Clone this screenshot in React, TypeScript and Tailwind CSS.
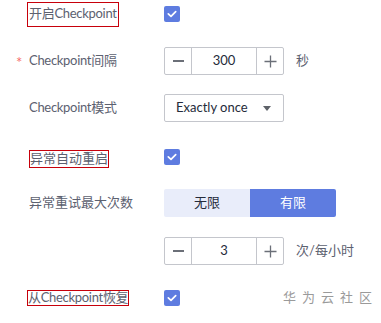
import React from "react";

const font = { fontFamily: 'Lato, "Noto Sans CJK SC", sans-serif' };

function Check() {
  return (
    <div className="w-4 h-4 rounded-[2px] bg-[#5e7ce0] flex items-center justify-center">
      <svg width="10" height="8" viewBox="0 0 10 8" fill="none">
        <path d="M1.3 3.8 L4 6.3 L8.7 1.6" stroke="white" strokeWidth="1.7" strokeLinecap="round" strokeLinejoin="round" />
      </svg>
    </div>
  );
}

function Stepper({ value }: { value: string }) {
  return (
    <div className="flex h-[28px] w-[120px] border border-[#c4c6cc] rounded-[2px] text-[13px] text-[#252b3a]">
      <div className="w-[27px] flex items-center justify-center border-r border-[#c4c6cc]">
        <div className="w-[11px] h-[1.5px] bg-[#6b6f78]" />
      </div>
      <div className="flex-1 flex items-center justify-center">{value}</div>
      <div className="w-[27px] flex items-center justify-center border-l border-[#c4c6cc]">
        <svg width="13" height="13" viewBox="0 0 13 13">
          <path d="M6.5 0.5 V12.5 M0.5 6.5 H12.5" stroke="#6b6f78" strokeWidth="1.3" />
        </svg>
      </div>
    </div>
  );
}

export default function App() {
  return (
    <div className="w-[381px] h-[323px] bg-white relative overflow-hidden text-[13px] text-[#5c6170]" style={font}>
      <div className="flex flex-col">
        {/* row 1 */}
        <div className="flex items-center h-[28px] mt-0">
          <div className="w-[164px] pl-[27px] flex items-center">
            <span className="border border-[#c7000b] h-[25px] px-[1px] flex items-center tracking-[-0.3px]">开启Checkpoint</span>
          </div>
          <Check />
        </div>
        {/* row 2 */}
        <div className="flex items-center h-[28px] mt-[19px]">
          <div className="w-[164px] pl-[16px] flex items-center">
            <span className="text-[#f66f6a] w-[12px] text-[15px] leading-none mt-[3px]">*</span>
            <span className="ml-[1px] tracking-[-0.3px]">Checkpoint间隔</span>
          </div>
          <Stepper value="300" />
          <span className="ml-[12px]">秒</span>
        </div>
        {/* row 3 */}
        <div className="flex items-center h-[28px] mt-[19px]">
          <div className="w-[164px] pl-[29px] tracking-[-0.3px]">Checkpoint模式</div>
          <div className="flex items-center justify-between h-[28px] w-[120px] border border-[#c4c6cc] rounded-[2px] pl-[11px] pr-[12px] text-[#252b3a]">
            <span>Exactly once</span>
            <svg width="8" height="5" viewBox="0 0 8 5">
              <path d="M0 0 H8 L4 5 Z" fill="#5e6269" />
            </svg>
          </div>
        </div>
        {/* row 4 */}
        <div className="flex items-center h-[28px] mt-[21px]">
          <div className="w-[164px] pl-[29px] flex items-center">
            <span className="border border-[#c7000b] h-[18px] flex items-center mt-[4px]">异常自动重启</span>
          </div>
          <Check />
        </div>
        {/* row 5 */}
        <div className="flex items-center h-[28px] mt-[18px]">
          <div className="w-[164px] pl-[29px]">异常重试最大次数</div>
          <div className="flex h-[28px] w-[172px]">
            <div className="w-[86px] bg-[#e9edfa] text-[#252b3a] flex items-center justify-center rounded-l-[2px]">无限</div>
            <div className="w-[86px] bg-[#5e7ce0] text-white flex items-center justify-center rounded-r-[2px]">有限</div>
          </div>
        </div>
        {/* row 6 */}
        <div className="flex items-center h-[28px] mt-[20px]">
          <div className="w-[164px]" />
          <Stepper value="3" />
          <span className="ml-[12px]">次/每小时</span>
        </div>
        {/* row 7 */}
        <div className="flex items-center h-[28px] mt-[19px]">
          <div className="w-[164px] pl-[27px] flex items-center">
            <span className="border border-[#c7000b] h-[16px] flex items-center tracking-[-0.3px]">从Checkpoint恢复</span>
          </div>
          <Check />
          <span className="ml-[103px] text-[#9a9a9a] tracking-[6px] text-[13px]">华为云社区</span>
        </div>
      </div>
    </div>
  );
}
